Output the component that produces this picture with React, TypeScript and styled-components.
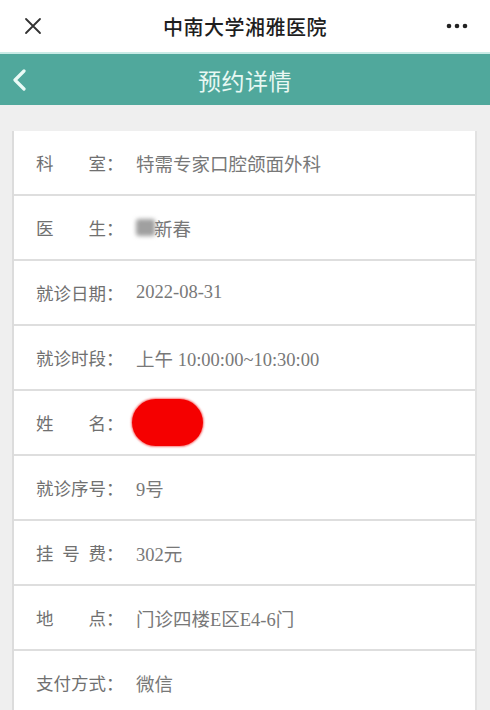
import React from 'react';
import styled, { createGlobalStyle } from 'styled-components';

const GlobalStyle = createGlobalStyle`
    html, body {
        margin: 0;
        padding: 0;
        background: #efefef;
    }
    body {
        font-family: "Noto Sans CJK SC", "Noto Sans", sans-serif;
    }
`;

const Page = styled.div`
    width: 490px;
    height: 710px;
    overflow: hidden;
    background: #efefef;
    display: flex;
    flex-direction: column;
`;

const TopBar = styled.header`
    height: 54px;
    flex-shrink: 0;
    background: #ffffff;
    display: flex;
    align-items: center;
    justify-content: space-between;
    padding: 0 22px 0 22px;
    box-sizing: border-box;
    border-bottom: 2px solid #c9ebe6;
`;

const TopTitle = styled.h1`
    margin: 0;
    font-size: 20px;
    font-weight: 500;
    color: #1e1e1e;
    letter-spacing: 0.5px;
`;

const IconButton = styled.span`
    width: 22px;
    height: 22px;
    display: flex;
    align-items: center;
    justify-content: center;
`;

const NavBar = styled.nav`
    height: 51px;
    flex-shrink: 0;
    background: #50a89c;
    display: flex;
    align-items: center;
    position: relative;
    justify-content: center;
`;

const BackButton = styled.span`
    position: absolute;
    left: 10px;
    top: 15px;
    display: flex;
`;

const NavTitle = styled.h2`
    margin: 0;
    font-size: 23px;
    font-weight: 400;
    color: #e8f8f3;
    letter-spacing: 0.5px;
`;

const Card = styled.section`
    flex-shrink: 0;
    margin: 26px 13px 0 12px;
    background: #ffffff;
    border-left: 2px solid #dcdcdc;
    border-right: 2px solid #e2e2e2;
`;

const Row = styled.div`
    height: 63px;
    display: flex;
    align-items: center;
    padding-left: 22px;
    border-bottom: 2px solid #dedede;
    font-family: "Liberation Serif", "Noto Sans CJK SC", serif;
    color: #707070;
`;

const Label = styled.span`
    width: 100px;
    display: flex;
    flex-shrink: 0;
    font-size: 17.5px;
    font-family: "Noto Sans CJK SC", sans-serif;
`;

const LabelText = styled.span`
    width: 70px;
    text-align: justify;
    text-align-last: justify;
`;

const Value = styled.span`
    display: flex;
    align-items: center;
    font-size: 18.5px;
    color: #787878;
`;

const Blurred = styled.span`
    display: inline-block;
    width: 19px;
    height: 17px;
    margin-right: -1px;
    background: #a0a0a0;
    filter: blur(2px);
    border-radius: 3px;
`;

const RedMark = styled.span`
    display: inline-block;
    width: 71px;
    height: 47px;
    border-radius: 24px;
    background: #f50000;
    box-shadow: 0 0 2px 1px rgba(240, 0, 0, 0.5);
    margin-left: -4px;
`;

type Item = { label: string; value: React.ReactNode };

const items: Item[] = [
    { label: '科室', value: '特需专家口腔颌面外科' },
    { label: '医生', value: <><Blurred />新春</> },
    { label: '就诊日期', value: '2022-08-31' },
    { label: '就诊时段', value: '上午 10:00:00~10:30:00' },
    { label: '姓名', value: <RedMark /> },
    { label: '就诊序号', value: '9号' },
    { label: '挂号费', value: '302元' },
    { label: '地点', value: '门诊四楼E区E4-6门' },
    { label: '支付方式', value: '微信' },
];

const App = () => {
    return <Page>
        <GlobalStyle />
        <TopBar>
            <IconButton>
                <svg width="20" height="20" viewBox="0 0 20 20">
                    <path d="M3 3 L17 17 M17 3 L3 17" stroke="#333" strokeWidth="1.8" strokeLinecap="round" />
                </svg>
            </IconButton>
            <TopTitle>中南大学湘雅医院</TopTitle>
            <IconButton>
                <svg width="22" height="6" viewBox="0 0 22 6">
                    <circle cx="3" cy="3" r="2.3" fill="#222" />
                    <circle cx="11" cy="3" r="2.3" fill="#222" />
                    <circle cx="19" cy="3" r="2.3" fill="#222" />
                </svg>
            </IconButton>
        </TopBar>
        <NavBar>
            <BackButton>
                <svg width="18" height="22" viewBox="0 0 18 22">
                    <path d="M14 2 L5 11 L14 20" stroke="#eafaf6" strokeWidth="3.2" fill="none" strokeLinecap="round" strokeLinejoin="round" />
                </svg>
            </BackButton>
            <NavTitle>预约详情</NavTitle>
        </NavBar>
        <Card>
            {items.map((item) => (
                <Row key={item.label}>
                    <Label>
                        <LabelText>{item.label}</LabelText>：
                    </Label>
                    <Value>{item.value}</Value>
                </Row>
            ))}
        </Card>
    </Page>
};

export default App;
